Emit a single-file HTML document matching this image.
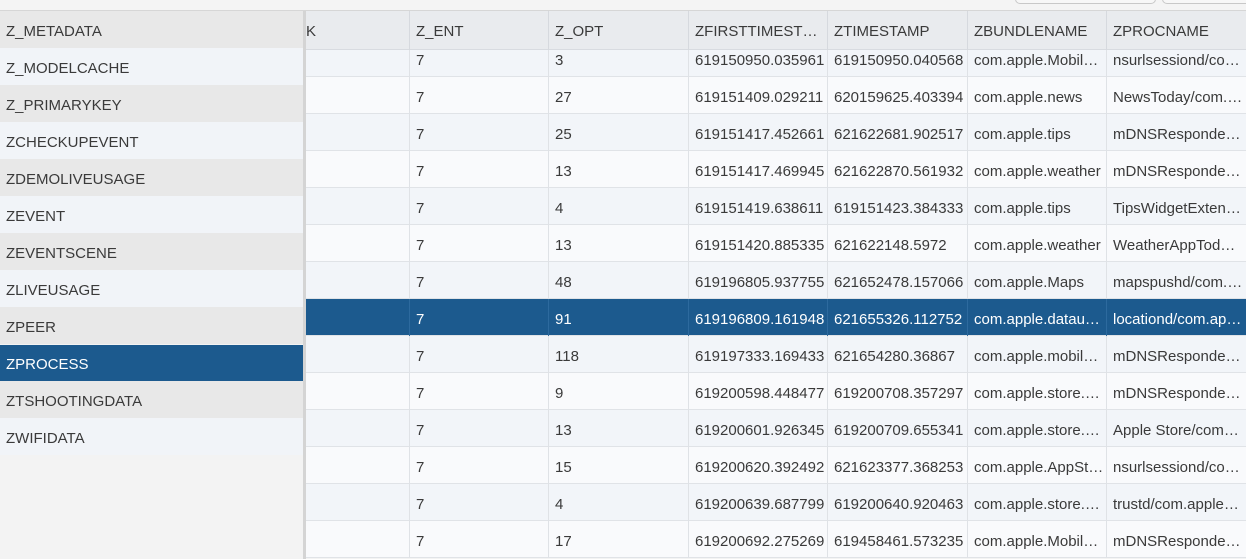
<!DOCTYPE html><html><head><style>
*{margin:0;padding:0;box-sizing:border-box}
body{width:1246px;height:559px;overflow:hidden;background:#f3f3f3;font-family:"Liberation Sans",Arial,sans-serif;font-size:15px;color:#3a3a3a;position:relative}
.top{position:absolute;left:0;top:0;width:1246px;height:11px;background:#f4f4f4;border-bottom:1px solid #d6d6d6}
.btn{position:absolute;top:-8px;height:12px;border:1px solid #c8c8c8;border-radius:5px;background:#f7f7f7}
.lp{position:absolute;left:0;top:11px;width:303px;height:548px;background:#f3f3f3}
.li{position:absolute;left:0;width:303px;height:37px;line-height:37px;padding-left:6px;padding-top:2px;white-space:nowrap}
.div{position:absolute;left:303px;top:11px;width:3px;height:548px;background:#d4d4d4}
.tb{position:absolute;left:306px;top:11px;width:940px;height:548px;overflow:hidden}
.r{position:absolute;left:0;width:940px;height:37px;border-bottom:1px solid #e0e3e7}
.c{position:absolute;top:0;height:37px;line-height:35px;padding-left:6px;padding-top:3px;border-left:1px solid #dfe2e6;white-space:nowrap;overflow:hidden}
.h{position:absolute;left:0;top:0;width:940px;height:39px;background:#e9ebee;border-bottom:1px solid #d8dbe0}
.h .c{height:39px;line-height:39px;padding-top:1px;border-left:1px solid #d6d9de}
.sel{background:#1c5a8e!important;color:#fff}
.sel .c{border-left-color:#2d6a9e}
</style></head><body>
<div class="top"><div class="btn" style="left:1015px;width:141px"></div><div class="btn" style="left:1162px;width:90px"></div></div>
<div class="lp">
<div class="li" style="top:0;background:#e8e8e8">Z_METADATA</div>
<div class="li" style="top:37px;background:#f1f4f8">Z_MODELCACHE</div>
<div class="li" style="top:74px;background:#e8e8e8">Z_PRIMARYKEY</div>
<div class="li" style="top:111px;background:#f1f4f8">ZCHECKUPEVENT</div>
<div class="li" style="top:148px;background:#e8e8e8">ZDEMOLIVEUSAGE</div>
<div class="li" style="top:185px;background:#f1f4f8">ZEVENT</div>
<div class="li" style="top:222px;background:#e8e8e8">ZEVENTSCENE</div>
<div class="li" style="top:259px;background:#f1f4f8">ZLIVEUSAGE</div>
<div class="li" style="top:296px;background:#e8e8e8">ZPEER</div>
<div class="li sel" style="top:334px;height:36px;line-height:36px">ZPROCESS</div>
<div class="li" style="top:370px;background:#e8e8e8">ZTSHOOTINGDATA</div>
<div class="li" style="top:407px;background:#f1f4f8">ZWIFIDATA</div>
</div>
<div class="div"></div>
<div class="tb" id="tb"></div>
<script>
var xs=[0,103,242,382,521,661,800,940];
var rows=[
["7","3","619150950.035961","619150950.040568","com.apple.Mobil…","nsurlsessiond/co…"],
["7","27","619151409.029211","620159625.403394","com.apple.news","NewsToday/com.…"],
["7","25","619151417.452661","621622681.902517","com.apple.tips","mDNSResponde…"],
["7","13","619151417.469945","621622870.561932","com.apple.weather","mDNSResponde…"],
["7","4","619151419.638611","619151423.384333","com.apple.tips","TipsWidgetExten…"],
["7","13","619151420.885335","621622148.5972","com.apple.weather","WeatherAppTod…"],
["7","48","619196805.937755","621652478.157066","com.apple.Maps","mapspushd/com.…"],
["7","91","619196809.161948","621655326.112752","com.apple.datau…","locationd/com.ap…"],
["7","118","619197333.169433","621654280.36867","com.apple.mobil…","mDNSResponde…"],
["7","9","619200598.448477","619200708.357297","com.apple.store.…","mDNSResponde…"],
["7","13","619200601.926345","619200709.655341","com.apple.store.…","Apple Store/com…"],
["7","15","619200620.392492","621623377.368253","com.apple.AppSt…","nsurlsessiond/co…"],
["7","4","619200639.687799","619200640.920463","com.apple.store.…","trustd/com.apple…"],
["7","17","619200692.275269","619458461.573235","com.apple.Mobil…","mDNSResponde…"]];
var h='';
rows.forEach(function(r,i){
 var top=29+37*i;var cls=i==7?'r sel':'r';
 var bg=i%2==0?'#f2f5f9':'#f9fafc';
 h+='<div class="'+cls+'" style="top:'+top+'px;background:'+bg+'">';
 h+='<div class="c" style="left:0;width:103px;border-left:none"></div>';
 for(var k=0;k<6;k++)h+='<div class="c" style="left:'+xs[k+1]+'px;width:'+(xs[k+2]-xs[k+1])+'px">'+r[k]+'</div>';
 h+='</div>';
});
var hd=["Z_ENT","Z_OPT","ZFIRSTTIMEST…","ZTIMESTAMP","ZBUNDLENAME","ZPROCNAME"];
h+='<div class="h"><div class="c" style="left:-6px;width:103px;border-left:none">K</div>';
for(var k=0;k<6;k++)h+='<div class="c" style="left:'+xs[k+1]+'px;width:'+(xs[k+2]-xs[k+1])+'px">'+hd[k]+'</div>';
h+='</div>';
document.getElementById('tb').innerHTML=h;
</script>
</body></html>
